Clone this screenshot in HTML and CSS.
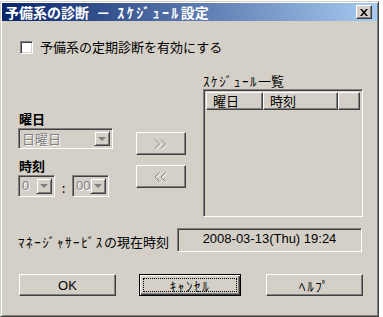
FILE: index.html
```html
<!DOCTYPE html>
<html>
<head>
    <title>予備系の診断</title>
    <link rel="stylesheet" href="styles.css">
</head>
<body>

    <div class="window">
        <div class="titlebar">
            <span class="title">予備系の診断 － <span class="hw">ｽｹｼﾞｭｰﾙ</span>設定</span>
            <span class="close-btn">
                <svg width="8" height="7" viewBox="0 0 8 7"><path d="M0 0h2l2 2.5L6 0h2L5 3.5 8 7H6L4 4.5 2 7H0l3-3.5z" fill="#000"/></svg>
            </span>
        </div>

        <div class="content">
            <label class="check-row">
                <span class="checkbox"></span>
                <span>予備系の定期診断を有効にする</span>
            </label>

            <div class="main">
                <div class="left-col">
                    <div class="field-label">曜日</div>
                    <div class="combo combo-day">
                        <span class="combo-text">日曜日</span>
                        <span class="combo-arrow"><span class="tri"></span></span>
                    </div>
                    <div class="field-label label-time">時刻</div>
                    <div class="time-row">
                        <div class="combo combo-small">
                            <span class="combo-text">0</span>
                            <span class="combo-arrow"><span class="tri"></span></span>
                        </div>
                        <span class="colon">:</span>
                        <div class="combo combo-small">
                            <span class="combo-text">00</span>
                            <span class="combo-arrow"><span class="tri"></span></span>
                        </div>
                    </div>
                </div>

                <div class="mid-col">
                    <div class="btn btn-move">
                        <svg width="16" height="12" viewBox="0 0 16 12"><path d="M2 1.5l4.5 4.5L2 10.5M8 1.5l4.5 4.5L8 10.5" fill="none" stroke="#fff" stroke-width="1" transform="translate(1 1)"/><path d="M2 1.5l4.5 4.5L2 10.5M8 1.5l4.5 4.5L8 10.5" fill="none" stroke="#808080" stroke-width="1"/></svg>
                    </div>
                    <div class="btn btn-move">
                        <svg width="16" height="12" viewBox="0 0 16 12"><path d="M6.5 1.5L2 6l4.5 4.5M12.5 1.5L8 6l4.5 4.5" fill="none" stroke="#fff" stroke-width="1" transform="translate(1 1)"/><path d="M6.5 1.5L2 6l4.5 4.5M12.5 1.5L8 6l4.5 4.5" fill="none" stroke="#808080" stroke-width="1"/></svg>
                    </div>
                </div>

                <div class="right-col">
                    <div class="list-label"><span class="hw">ｽｹｼﾞｭｰﾙ</span>一覧</div>
                    <div class="listview">
                        <div class="list-header">
                            <span class="col col-day">曜日</span>
                            <span class="col col-time">時刻</span>
                            <span class="col col-rest"></span>
                        </div>
                    </div>
                </div>
            </div>

            <div class="now-row">
                <span class="now-label"><span class="hw">ﾏﾈｰｼﾞｬｻｰﾋﾞｽ</span>の現在時刻</span>
                <span class="now-field">2008-03-13(Thu) 19:24</span>
            </div>

            <div class="button-row">
                <div class="btn btn-ok">OK</div>
                <div class="btn btn-default"><span class="focus"><span class="hw">ｷｬﾝｾﾙ</span></span></div>
                <div class="btn btn-help"><span class="hw">ﾍﾙﾌﾟ</span></div>
            </div>
        </div>
    </div>

</body>
</html>
```

FILE: styles.css
```css
body {
    margin: 0;
    background: #fff;
    font-family: "Noto Sans CJK JP", "Liberation Sans", sans-serif;
    font-size: 13px;
    color: #000;
}

/* 半角カナは幅が狭く見えるので字間を広げる */
.hw {
    letter-spacing: 1.6px;
}

.window {
    box-sizing: border-box;
    width: 379px;
    height: 316px;
    margin-top: 1px;
    background: #d4d0c8;
    border: 1px solid;
    border-color: #d4d0c8 #404040 #404040 #d4d0c8;
    box-shadow: inset 1px 1px #fff, inset -1px -1px #808080;
    padding: 1px 1px 0 1px;
}

/* タイトルバー */
.titlebar {
    height: 18px;
    display: flex;
    align-items: center;
    justify-content: space-between;
    background: linear-gradient(to right, #0a246a, #a6caf0);
    padding: 0 5px 0 3px;
}
.title {
    color: #fff;
    font-weight: bold;
    font-size: 14px;
    line-height: 18px;
    white-space: pre;
    word-spacing: 4px;
}
.title .hw {
    letter-spacing: 2.4px;
}
.close-btn {
    box-sizing: border-box;
    width: 16px;
    height: 14px;
    display: flex;
    align-items: center;
    justify-content: center;
    background: #d4d0c8;
    border: 1px solid;
    border-color: #fff #404040 #404040 #fff;
    box-shadow: inset -1px -1px #808080;
}

.content {
    padding-left: 16px;
}

.check-row {
    display: flex;
    align-items: center;
    margin-top: 19px;
    height: 14px;
    line-height: 14px;
}
.checkbox {
    box-sizing: border-box;
    width: 13px;
    height: 13px;
    margin: 0 7px 0 2px;
    background: #fff;
    border: 1px solid;
    border-color: #808080 #fff #fff #808080;
    box-shadow: inset 1px 1px #404040, inset -1px -1px #d4d0c8;
}

.main {
    display: flex;
    margin-top: 19px;
}

/* 左側 */
.left-col {
    width: 96px;
    padding-top: 38px;
}
.field-label {
    font-weight: bold;
    height: 15px;
    line-height: 15px;
    margin-left: 1px;
}
.label-time {
    margin-top: 9px;
}
.combo {
    box-sizing: border-box;
    display: flex;
    align-items: center;
    justify-content: space-between;
    background: #d4d0c8;
    border: 1px solid;
    border-color: #808080 #fff #fff #808080;
    box-shadow: inset 1px 1px #404040, inset -1px -1px #d4d0c8;
    padding: 2px;
}
.combo-day {
    width: 95px;
    height: 21px;
    margin-top: 2px;
}
.combo-text {
    color: #808080;
    text-shadow: 1px 1px #fff;
    padding-left: 1px;
    line-height: 15px;
}
.combo-arrow {
    box-sizing: border-box;
    width: 16px;
    height: 100%;
    display: flex;
    align-items: center;
    justify-content: center;
    border: 1px solid;
    border-color: #d4d0c8 #404040 #404040 #d4d0c8;
    box-shadow: inset 1px 1px #fff, inset -1px -1px #808080;
}
.tri {
    width: 0;
    height: 0;
    border-left: 4px solid transparent;
    border-right: 4px solid transparent;
    border-top: 4px solid #808080;
}
.time-row {
    display: flex;
    align-items: center;
    margin-top: 1px;
}
.combo-small {
    width: 37px;
    height: 22px;
    font-family: "Liberation Sans", sans-serif;
}
.colon {
    width: 17px;
    text-align: center;
    margin-top: 4px;
}

/* 中央ボタン */
.mid-col {
    margin-left: 22px;
    padding-top: 59px;
    display: flex;
    flex-direction: column;
    gap: 10px;
}
.btn {
    box-sizing: border-box;
    display: flex;
    align-items: center;
    justify-content: center;
    background: #d4d0c8;
    border: 1px solid;
    border-color: #fff #404040 #404040 #fff;
    box-shadow: inset -1px -1px #808080, inset 1px 1px #d4d0c8;
}
.btn-move {
    width: 50px;
    height: 23px;
}

/* 右側 一覧 */
.right-col {
    margin-left: 17px;
}
.list-label {
    height: 15px;
    line-height: 15px;
    margin-bottom: 1px;
}
.listview {
    box-sizing: border-box;
    width: 160px;
    height: 128px;
    background: #d4d0c8;
    border: 1px solid;
    border-color: #808080 #fff #fff #808080;
    box-shadow: inset 1px 1px #404040, inset -1px -1px #d4d0c8;
    padding: 2px 2px 0 2px;
}
.list-header {
    display: flex;
    height: 18px;
}
.col {
    box-sizing: border-box;
    height: 18px;
    line-height: 15px;
    padding-left: 6px;
    border: 1px solid;
    border-color: #fff #404040 #404040 #fff;
    box-shadow: inset -1px -1px #808080;
}
.col-day {
    width: 57px;
}
.col-time {
    width: 75px;
}
.col-rest {
    width: 22px;
}

/* 現在時刻 */
.now-row {
    display: flex;
    align-items: center;
    margin-top: 11px;
}
.now-label {
    width: 159px;
    padding-top: 2px;
}
.now-field {
    box-sizing: border-box;
    width: 185px;
    height: 24px;
    line-height: 20px;
    text-align: center;
    font-family: "Liberation Sans", sans-serif;
    font-size: 13px;
    border: 1px solid;
    border-color: #808080 #fff #fff #808080;
    box-shadow: inset 1px 1px #404040, inset -1px -1px #d4d0c8;
}

/* 下部ボタン */
.button-row {
    display: flex;
    margin-top: 22px;
    margin-left: 1px;
}
.button-row .btn {
    height: 22px;
    font-size: 13px;
}
.btn-ok {
    width: 97px;
    font-family: "Liberation Sans", sans-serif;
}
.btn-default {
    width: 102px;
    margin-left: 23px;
    border: 1px solid #000;
    box-shadow: inset 1px 1px #fff, inset -1px -1px #404040, inset -2px -2px #808080;
    padding: 3px;
}
.focus {
    display: flex;
    align-items: center;
    justify-content: center;
    width: 100%;
    height: 100%;
    box-sizing: border-box;
    border: 1px dotted #000;
}
.btn-help {
    width: 97px;
    margin-left: 25px;
}
```
